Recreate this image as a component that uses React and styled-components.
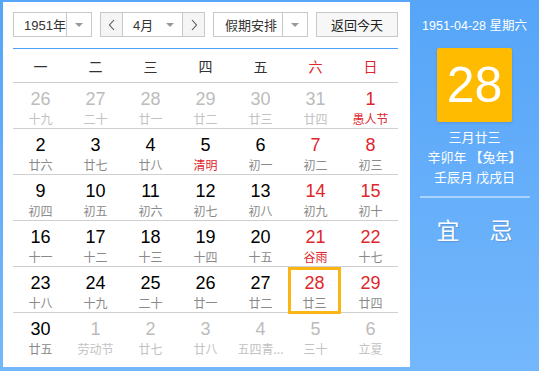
import React from 'react';
import styled, {createGlobalStyle} from 'styled-components';

const GlobalStyle = createGlobalStyle`
  body {
    margin: 0;
    font-family: "Liberation Sans", "Noto Sans CJK SC", sans-serif;
  }
`;

const Frame = styled.div`
  width: 539px;
  height: 371px;
  box-sizing: border-box;
  padding: 2px 0 4px 3px;
  display: flex;
  background: linear-gradient(180deg, #56a5f8 0%, #74b7fc 100%);
`;

const Main = styled.div`
  width: 407px;
  background: #fff;
  box-sizing: border-box;
  padding: 10px 12px 0 10px;
`;

const Toolbar = styled.div`
  height: 25px;
  display: flex;
  justify-content: space-between;
  font-family: "Liberation Sans", "Noto Sans CJK SC", sans-serif;
  font-size: 13px;
  color: #333;
`;

const Select = styled.div`
  width: ${p => p.w}px;
  box-sizing: border-box;
  border: 1px solid #c8c8c8;
  display: flex;
  align-items: stretch;
  background: #fff;
`;

const SelectText = styled.div`
  flex: 1;
  display: flex;
  align-items: center;
  padding-left: ${p => p.pl || 10}px;
`;

const Caret = styled.div`
  width: 24px;
  border-left: 1px solid ${p => (p.line ? '#c8c8c8' : 'transparent')};
  display: flex;
  align-items: center;
  justify-content: center;
  &::after {
    content: '';
    border-left: 4px solid transparent;
    border-right: 4px solid transparent;
    border-top: 4px solid #999;
  }
`;

const Group = styled.div`
  width: 105px;
  box-sizing: border-box;
  border: 1px solid #c8c8c8;
  display: flex;
`;

const Arrow = styled.div`
  width: 21px;
  background: #f5f5f5;
  display: flex;
  align-items: center;
  justify-content: center;
  border-${p => p.side}: 1px solid #c8c8c8;
`;

const Middle = styled.div`
  flex: 1;
  display: flex;
  align-items: center;
`;

const TodayButton = styled.div`
  width: 82px;
  box-sizing: border-box;
  border: 1px solid #c8c8c8;
  background: #f7f7f7;
  display: flex;
  align-items: center;
  justify-content: center;
  font-size: 13px;
  color: #222;
`;

const BlueLine = styled.div`
  height: 1px;
  margin-top: 11px;
  background: #4da2f6;
`;

const WeekHead = styled.div`
  display: grid;
  grid-template-columns: repeat(7, 55px);
  height: 33px;
  align-items: center;
  font-size: 14px;
  font-family: "Noto Sans CJK SC", sans-serif;
`;

const WeekDay = styled.div`
  text-align: center;
  color: ${p => (p.weekend ? '#e0262c' : '#333')};
`;

const Row = styled.div`
  display: grid;
  grid-template-columns: repeat(7, 55px);
  height: 46px;
  box-sizing: border-box;
  border-top: 1px solid #cfcfcf;
`;

const Cell = styled.div`
  position: relative;
  display: flex;
  flex-direction: column;
  align-items: center;
  padding-top: 6px;
  box-sizing: border-box;
  ${p => p.selected && `
    margin: 0 2px 0 0;
    border: 3px solid #fbb614;
    padding-top: 3px;
  `}
`;

const Num = styled.div`
  font-family: "Liberation Sans", sans-serif;
  font-size: 18px;
  line-height: 20px;
  color: ${p => p.color};
`;

const Lunar = styled.div`
  font-family: "Noto Sans CJK SC", sans-serif;
  font-size: 12px;
  line-height: 16px;
  margin-top: 2px;
  color: ${p => p.color};
  white-space: nowrap;
`;

const Side = styled.div`
  flex: 1;
  display: flex;
  flex-direction: column;
  align-items: center;
  color: #fff;
  font-family: "Liberation Sans", "Noto Sans CJK SC", sans-serif;
`;

const DateLine = styled.div`
  margin-top: 15px;
  font-size: 12.5px;
  line-height: 18px;
`;

const BigDay = styled.div`
  margin-top: 13px;
  width: 75px;
  height: 74px;
  border-radius: 2px;
  background: #ffbb00;
  box-shadow: 0 1px 3px rgba(0, 0, 0, 0.12);
  display: flex;
  align-items: center;
  justify-content: center;
  font-size: 50px;
  font-family: "Liberation Sans", sans-serif;
`;

const Info = styled.div`
  margin-top: 5px;
  font-size: 13px;
  line-height: 20px;
  text-align: center;
  font-family: "Noto Sans CJK SC", sans-serif;
`;

const Divider = styled.div`
  width: 110px;
  height: 2px;
  margin-top: 9px;
  background: rgba(255, 255, 255, 0.45);
`;

const Good = styled.div`
  margin-top: 14px;
  width: 76px;
  display: flex;
  justify-content: space-between;
  font-size: 23px;
  font-family: "Noto Sans CJK SC", sans-serif;
  text-shadow: 1px 1px 1px rgba(0, 0, 0, 0.15);
`;

const Chevron = ({dir}) => (
  <svg width="8" height="12" viewBox="0 0 8 12">
    <path
      d={dir === 'left' ? 'M6 1 L1.5 6 L6 11' : 'M2 1 L6.5 6 L2 11'}
      fill="none"
      stroke="#555"
      strokeWidth="1.1"
    />
  </svg>
);

const weekNames = ['一', '二', '三', '四', '五', '六', '日'];

// [day, lunar, kind] kind: o=other month, h=holiday red lunar, s=selected
const weeks = [
  [['26', '十九', 'o'], ['27', '二十', 'o'], ['28', '廿一', 'o'], ['29', '廿二', 'o'], ['30', '廿三', 'o'], ['31', '廿四', 'o'], ['1', '愚人节', 'h']],
  [['2', '廿六'], ['3', '廿七'], ['4', '廿八'], ['5', '清明', 'h'], ['6', '初一'], ['7', '初二'], ['8', '初三']],
  [['9', '初四'], ['10', '初五'], ['11', '初六'], ['12', '初七'], ['13', '初八'], ['14', '初九'], ['15', '初十']],
  [['16', '十一'], ['17', '十二'], ['18', '十三'], ['19', '十四'], ['20', '十五'], ['21', '谷雨', 'h'], ['22', '十七']],
  [['23', '十八'], ['24', '十九'], ['25', '二十'], ['26', '廿一'], ['27', '廿二'], ['28', '廿三', 's'], ['29', '廿四']],
  [['30', '廿五'], ['1', '劳动节', 'o'], ['2', '廿七', 'o'], ['3', '廿八', 'o'], ['4', '五四青...', 'o'], ['5', '三十', 'o'], ['6', '立夏', 'o']],
];

const RED = '#e0262c';

const DayCell = ({day, lunar, kind, col}) => {
  const weekend = col >= 5;
  let numColor = weekend ? RED : '#000';
  let lunarColor = '#8a8a8a';
  if (kind === 'o') {
    numColor = '#bcbcbc';
    lunarColor = '#c2c2c2';
  }
  if (kind === 'h') lunarColor = RED;
  return (
    <Cell selected={kind === 's'}>
      <Num color={numColor}>{day}</Num>
      <Lunar color={lunarColor}>{lunar}</Lunar>
    </Cell>
  );
};

export default function App() {
  return (
    <>
      <GlobalStyle/>
      <Frame>
        <Main>
          <Toolbar>
            <Select w={79}>
              <SelectText>1951年</SelectText>
              <Caret line/>
            </Select>
            <Group>
              <Arrow side="right"><Chevron dir="left"/></Arrow>
              <Middle>
                <SelectText>4月</SelectText>
                <Caret/>
              </Middle>
              <Arrow side="left"><Chevron dir="right"/></Arrow>
            </Group>
            <Select w={95}>
              <SelectText pl={11}>假期安排</SelectText>
              <Caret line/>
            </Select>
            <TodayButton>返回今天</TodayButton>
          </Toolbar>
          <BlueLine/>
          <WeekHead>
            {weekNames.map((w, i) => (
              <WeekDay key={w} weekend={i >= 5}>{w}</WeekDay>
            ))}
          </WeekHead>
          {weeks.map((week, r) => (
            <Row key={r}>
              {week.map(([day, lunar, kind], c) => (
                <DayCell key={c} day={day} lunar={lunar} kind={kind} col={c}/>
              ))}
            </Row>
          ))}
        </Main>
        <Side>
          <DateLine>1951-04-28 星期六</DateLine>
          <BigDay>28</BigDay>
          <Info>
            三月廿三<br/>
            辛卯年 【兔年】<br/>
            壬辰月 戊戌日
          </Info>
          <Divider/>
          <Good>
            <span>宜</span>
            <span>忌</span>
          </Good>
        </Side>
      </Frame>
    </>
  );
}
